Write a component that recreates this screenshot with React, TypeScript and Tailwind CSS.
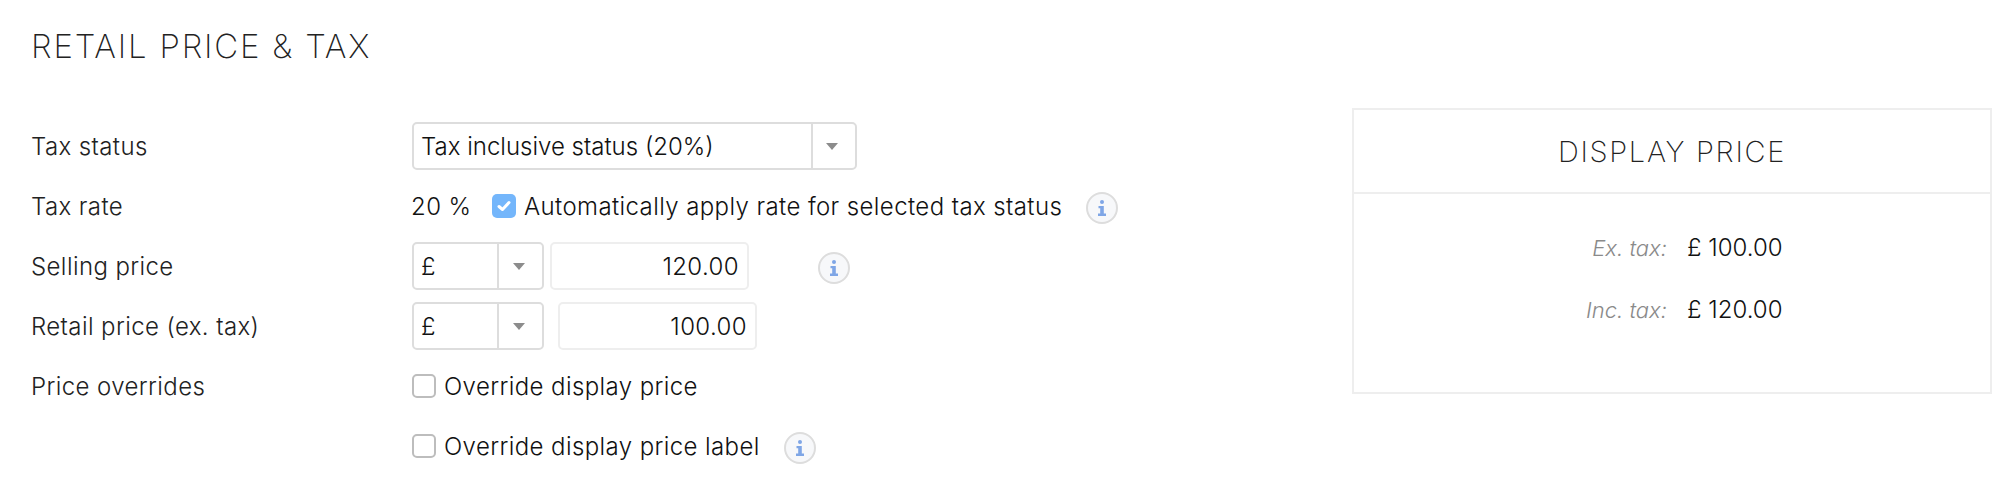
import { ReactNode } from 'react';

function InfoIcon({ className = '' }: { className?: string }) {
  return (
    <span className={`flex size-8 shrink-0 items-center justify-center rounded-full border-2 border-[#dddddd] bg-[#f7f8fa] ${className}`}>
      <svg width="10" height="16" viewBox="0 0 10 16" fill="#7fa6e6">
        <circle cx="5" cy="2" r="2" />
        <path d="M1.5 6h5.3v7.6H9V16H1v-2.4h2.2V8.2H1.5z" />
      </svg>
    </span>
  );
}

function Caret() {
  return (
    <svg width="12" height="7" viewBox="0 0 12 7" fill="#8c8c8c">
      <path d="M0 0h12L6 7z" />
    </svg>
  );
}

function Select({ value, width, caretWidth }: { value: string; width: string; caretWidth: string }) {
  return (
    <div className={`flex h-12 shrink-0 items-stretch rounded-[5px] border-2 border-[#dddddd] bg-white ${width}`}>
      <div className="flex flex-1 items-center pt-0.5 pl-[7px] tracking-normal text-[#111]">{value}</div>
      <div className={`flex items-center justify-center border-l-2 border-[#dddddd] pr-1 ${caretWidth}`}>
        <Caret />
      </div>
    </div>
  );
}

function Amount({ value, className }: { value: string; className: string }) {
  return (
    <div className={`flex h-12 w-[199px] items-center justify-end rounded-[5px] border-2 border-[#eeeeee] bg-white pt-0.5 pr-2 text-[#111] ${className}`}>
      {value}
    </div>
  );
}

function Checkbox({ checked }: { checked?: boolean }) {
  if (checked) {
    return (
      <span className="flex size-6 shrink-0 items-center justify-center rounded-[5px] bg-[#74b6fb]">
        <svg width="14" height="12" viewBox="0 0 14 12" fill="none" stroke="#fff" strokeWidth="3" strokeLinecap="round" strokeLinejoin="round">
          <path d="M2 6.5l3.5 3L12 2.5" />
        </svg>
      </span>
    );
  }
  return <span className="size-6 shrink-0 rounded-[5px] border-2 border-[#bdbdbd] bg-white" />;
}

function Row({ label, children }: { label?: string; children: ReactNode }) {
  return (
    <div className="flex h-[60px] items-center text-[24px] tracking-[0.4px]">
      <div className="-ml-px w-[380px] shrink-0 pt-0.5 text-[#222]">{label}</div>
      <div className="ml-px flex items-center text-[#111]">{children}</div>
    </div>
  );
}

export default function App() {
  return (
    <div className="flex h-[480px] w-[2014px] overflow-hidden bg-white font-['Inter',sans-serif] font-light">
      {/* Form */}
      <div className="w-[1352px] shrink-0 pl-8">
        <h2 className="-ml-px h-[116px] pt-[26px] text-[33px] leading-10 font-extralight tracking-[1.8px] text-[#222]">RETAIL PRICE &amp; TAX</h2>

        <Row label="Tax status">
          <Select value="Tax inclusive status (20%)" width="w-[445px]" caretWidth="w-[44px]" />
        </Row>
        <Row label="Tax rate">
          <span className="-ml-px w-[81px] pt-0.5">20 %</span>
          <Checkbox checked />
          <span className="ml-2 pt-0.5">Automatically apply rate for selected tax status</span>
          <InfoIcon className="ml-6 mt-1" />
        </Row>
        <Row label="Selling price">
          <Select value="£" width="w-[132px]" caretWidth="w-[45px]" />
          <Amount value="120.00" className="ml-[6px]" />
          <InfoIcon className="ml-[69px] mt-1" />
        </Row>
        <Row label="Retail price (ex. tax)">
          <Select value="£" width="w-[132px]" caretWidth="w-[45px]" />
          <Amount value="100.00" className="ml-[14px]" />
        </Row>
        <Row label="Price overrides">
          <Checkbox />
          <span className="ml-2 pt-0.5">Override display price</span>
        </Row>
        <Row>
          <Checkbox />
          <span className="ml-2 pt-0.5">Override display price label</span>
          <InfoIcon className="ml-6 mt-1" />
        </Row>
      </div>

      {/* Display price panel */}
      <div className="mt-[108px] h-[286px] w-[640px] shrink-0 border-2 border-[#eeeeee]">
        <div className="flex h-[84px] items-center justify-center border-b-2 border-[#eeeeee] pt-0.5 text-[29px] font-extralight tracking-[1.7px] text-[#222]">
          DISPLAY PRICE
        </div>
        <div className="pt-[23px]">
          <PriceLine label="Ex. tax:" value="£ 100.00" />
          <PriceLine label="Inc. tax:" value="£ 120.00" />
        </div>
      </div>
    </div>
  );
}

function PriceLine({ label, value }: { label: string; value: string }) {
  return (
    <div className="flex h-[62px] items-center pl-[200px]">
      <span className="w-[113px] text-right text-[22px] text-[#8a8a8a] italic">{label}</span>
      <span className="ml-5 text-[24px] text-[#111]">{value}</span>
    </div>
  );
}
